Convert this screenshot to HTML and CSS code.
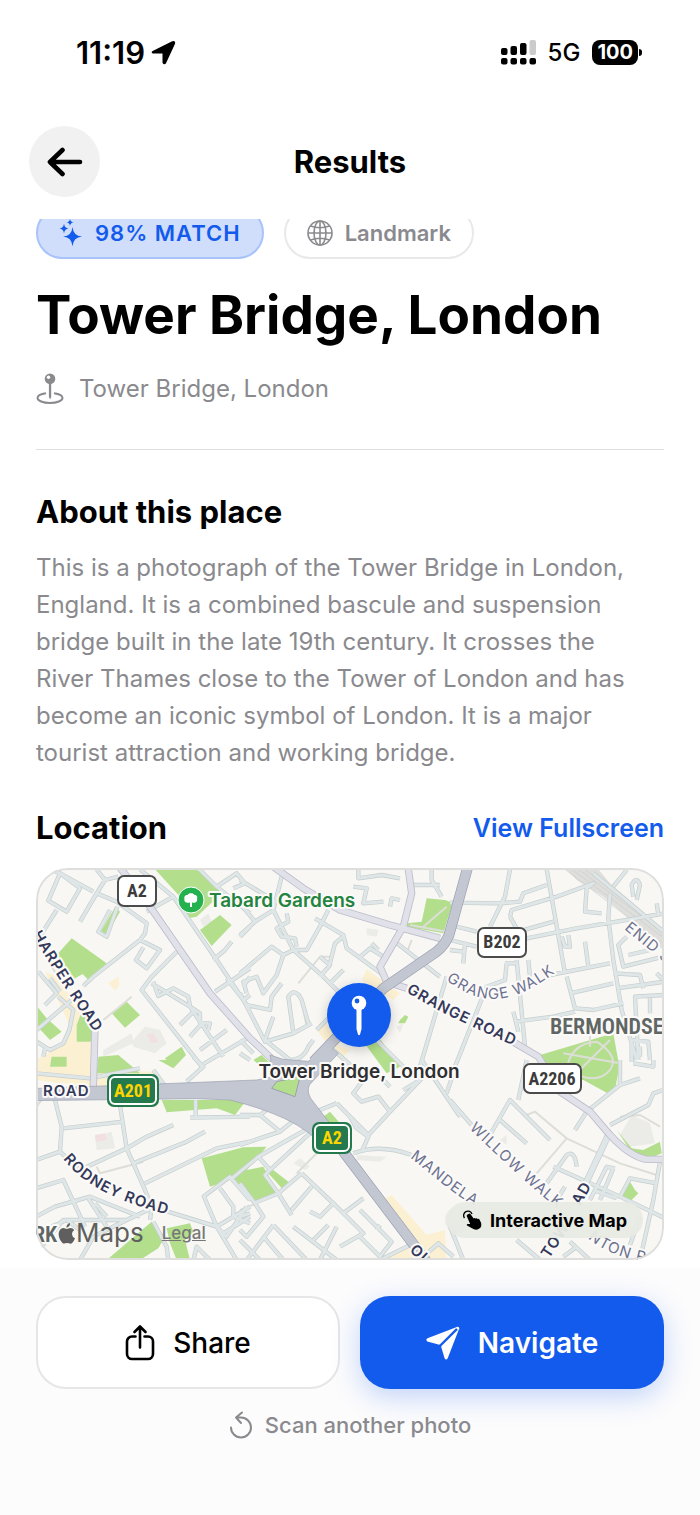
FILE: index.html
```html
<!DOCTYPE html>
<html lang="en">
<head>
<meta charset="utf-8">
<meta name="viewport" content="width=device-width, initial-scale=1">
<title>Results</title>
<link rel="stylesheet" href="styles.css">
</head>
<body>
<div class="screen">
  <div class="status">
    <div class="status-side">
      <span class="clock">11:19</span>
      <svg width="25" height="25" viewBox="0 0 25 25"><path d="M2 11.600 21.500 2q2.500-.8 1.700 1.700L14.500 22.500q-1.200 1.800-2.200 0V13.800q0-1.100-1.100-1.100H2.300q-1.500-.3-.3-1.100z" stroke="#000" stroke-width="1.600" stroke-linejoin="round"/></svg>
    </div>
    <div class="status-side status-right">
      <svg width="35" height="25" viewBox="0 0 35 25"><rect x="0" y="8" width="6.500" height="7" rx="2"/><rect x="9.500" y="6" width="6.500" height="9" rx="2"/><rect x="19" y="3" width="6.500" height="12" rx="2"/><rect x="28.500" y="0" width="6.500" height="15" rx="2" fill="#cbcbcb"/><rect x="0" y="18" width="6.500" height="6.500" rx="2"/><rect x="9.500" y="18" width="6.500" height="6.500" rx="2"/><rect x="19" y="18" width="6.500" height="6.500" rx="2"/><rect x="28.500" y="18" width="6.500" height="6.500" rx="2"/></svg>
      <span class="network">5G</span>
      <span class="battery">100</span>
    </div>
  </div>

  <header class="header">
    <button class="back" type="button" aria-label="Back">
      <svg width="36" height="30" viewBox="0 0 36 30"><path d="M33 15H3M15.500 3 3 15l12.500 12" fill="none" stroke="#000" stroke-width="4.600" stroke-linecap="round" stroke-linejoin="round"/></svg>
    </button>
    <h1 class="header-title">Results</h1>
  </header>

  <main class="content">
    <div class="pills">
      <span class="pill pill-match">
        <svg width="24" height="28" viewBox="0 0 24 28" fill="#135bec"><path d="M13.500 8q.8 9 9.500 9.500-8.700.8-9.500 9.800-.8-9-9.300-9.800 8.500-.5 9.300-9.500zM5 4.500q.5 4.500 4.500 5-4 .5-4.500 5-.5-4.500-4.500-5 4-.5 4.500-5zM11 0q.4 3 3.500 3.300Q11.400 3.700 11 7q-.4-3.300-3.300-3.700Q10.600 3 11 0z"/></svg>
        98% MATCH</span>
      <span class="pill pill-type">
        <svg width="26" height="26" viewBox="0 0 26 26" fill="none" stroke="#8a8a8e" stroke-width="1.600"><circle cx="13" cy="13" r="12"/><ellipse cx="13" cy="13" rx="6" ry="12"/><path d="M13 1v24M1 13h24M3.500 6Q13 9.500 22.500 6M3.500 20Q13 16.500 22.500 20"/></svg>
        Landmark</span>
    </div>

    <h2 class="title">Tower Bridge, London</h2>
    <p class="place">
      <svg width="28" height="32" viewBox="0 0 27 32"><path d="M9.500 20.300C4.500 21 1 22.700 1 25c0 2.800 5.600 5 12.500 5S26 27.800 26 25c0-2.300-3.500-4-8.500-4.700" fill="none" stroke="#8a8a8e" stroke-width="2"/><path d="M12.400 10h2.300v14l-1.100 2.500-1.200-2.500z" fill="#8a8a8e"/><circle cx="13.500" cy="5.800" r="5.300" fill="#8a8a8e"/><circle cx="12" cy="4.300" r="1.700" fill="#fff"/></svg>
      Tower Bridge, London</p>

    <section class="about">
      <h3 class="heading">About this place</h3>
      <p class="about-text">This is a photograph of the Tower Bridge in London, England. It is a combined bascule and suspension bridge built in the late 19th century. It crosses the River Thames close to the Tower of London and has become an iconic symbol of London. It is a major tourist attraction and working bridge.</p>
    </section>

    <section class="location">
      <div class="location-head">
        <h3 class="heading">Location</h3>
        <a class="fullscreen" href="#map">View Fullscreen</a>
      </div>
      <div class="map" id="map">
        <svg class="map-art" viewBox="0 0 628 392" preserveAspectRatio="xMidYMid slice" role="img" aria-label="Map of Tower Bridge, London">
          <defs>
            <g id="minor">
              <path d="M60 28 90 40 55 122 110 155 150 85 90 40 190 95M80 150 20 245M225 60 200 100 150 185M225 60 200 28M225 60 265 50M200 100 260 125 350 190 345 220 330 240 190 350 160 378M262 140 230 230 205 215 240 150M330 240 390 270 350 325 318 300 340 262M440 275 365 350 335 390 520 625M330 28 430 110 560 300 660 450M430 110 350 155M555 395 660 325M510 30 560 80 660 160M560 80 620 40 645 70 610 85M550 300 585 270 605 245M630 230 660 200M25 335 80 400 45 435M60 355 90 395M85 410 130 450 118 510 100 550 60 570 20 545M20 510 125 420M45 565 40 590M370 365 385 408 430 385 475 410 480 440 510 460 510 490 540 490 535 510M450 495 495 450M480 530 520 485M510 570 590 510M520 612 660 530M365 370 480 440 580 590M590 355 640 420 660 405M640 380 660 350"/>
              <path transform="translate(630)" d="M0 60 100 120M125 50 100 150 160 270 250 350 300 400M0 225 45 185 100 150M0 130 45 185M140 160 145 185 110 205 125 230 165 235 170 260M160 270 200 270 245 190 265 150M225 175 310 225 320 265 430 345M315 225 285 250 270 310M0 340 95 260 130 285 110 345 70 400 50 350 10 365 20 400M130 285 160 270M0 400 75 545 160 520 215 490M100 470 75 540 150 600M20 435 90 450 95 410 125 370M160 520 145 410Q165 380 185 420L205 490M230 510 300 440M240 350 270 315 240 290M270 370 310 330M355 28 355 55 425 45 480 55M340 80 380 85 370 130 430 125M450 140 455 115 480 120M520 75 600 75M575 28 575 60 605 110M355 295 390 265 430 290M395 250 415 270M465 245 600 350M620 350 540 620M275 565 360 640M400 530 490 620M145 600Q190 600 205 560L220 540M0 540 40 580M0 580 30 600"/>
              <path transform="translate(1260)" d="M0 128 150 130 210 125 220 100 290 75M180 28 165 110 120 200M290 28 345 340M180 170 185 150 320 110 430 70 410 85 405 155 455 160M180 170 205 215 310 185M0 195 80 215M0 240 80 260M230 235 380 205 500 185 645 160M430 40 540 130 640 215M480 100 475 175 490 300 515 450 560 600M550 110 545 75Q560 45 570 75L560 120M530 230 505 255 520 320 640 290M535 285 600 270M170 310 165 360 110 380 15 620M200 310 165 310M235 300 240 350M200 300 225 560M300 345 480 310M405 245 415 320M335 230 345 260 360 260 355 225M350 350 375 445 430 450 520 430M360 400 490 370M490 340 570 345 580 385M500 385 645 365 620 340M190 455 205 515M195 485 310 470 375 455M565 600 555 410 640 405M600 600 595 545 545 540 545 605M570 560 570 590M600 410 600 460M490 80 530 30M620 130 625 165M0 270 40 275M45 250 40 310"/>
              <path transform="translate(0 600)" d="M75 120 95 200 90 275 18 300M100 205 280 185M270 135 290 265 345 390 365 440 360 480M90 275 150 330 290 265 350 230 430 195M310 310 470 245 525 215M345 370 560 265 660 245M365 440 560 500 620 600M18 385 100 360 165 500M18 470 75 440 180 410 330 470M195 430 230 470M175 415 230 500M365 445 290 480 190 530 150 600M370 485 410 560 415 600M520 405 560 500 660 440M520 410 600 350 660 420M570 385 610 440 610 470 660 490M480 173 660 170M497 120 497 170M490 600 500 560 540 600M18 580 100 480 290 480M18 520 110 480 150 510M470 65 520 20 490-10M18 40 180 55 330 25M370 30 410 85M560 500 590 530 650 440M580 520 660 470"/>
              <path transform="translate(630 600)" d="M0 165 60 165 120 215 200 150M80 150 60 165M0 255 120 215M-30 360 55 290 240 185M55 290 90 330 215 215M290 130 385 225 450 155 415 110 365 125 340 100 370 60M215 160 290 130M330 170 350 205 385 230 365 275M450 155 560 40M340 280Q420 250 515 285M400 30 450 80M490 90 540 60M185 340 115 400 40 430M185 340 280 430 240 470 210 455M280 430 370 520 300 560M115 400 155 465M155 450 215 380M310 460 370 415M90 330 75 345 115 400M0 370 45 430 70 470 20 530 0 510M0 540 60 600M100 495 20 600M100 495 200 600M160 500 290 600M220 540 265 495M360 450 455 545 420 590 360 530M420 495 410 510M420 600 520 550M545 0 660 170M640 40 620 100M550 590 595 550 640 590M70 530 130 600M290 500 240 600M0 470 30 460"/>
              <path transform="translate(1260 600)" d="M0 120 65 195M230 0 205 120M120 225 180 120 300 240M150 180 230 250M510 75 410 155 375 210M480 195 595 135 610 100 640 90M310 320 510 410 645 475M290 370 350 285Q375 270 380 320M345 380 320 420M470 320 420 420M490 325 450 420M630 305 610 420 570 600M510 410 540 355 620 370M200 540 270 600M360 545 420 600M340 590 380 560M510 0 510 75 570 55M550 10 610 20 610 0M0 500 40 600M430 390 500 415M540 555 570 470M465 320 495 325"/>
            </g>
            <path id="mid" d="M260 10 360 140 540 400 660 535 740 610M730 20 820 85 930 150 1080 195 1230 235M1135 28 1145 100 1120 200 1050 320 1070 365 1130 385M1440 540 1525 590 1590 695 1680 755 1740 825Q1800 890 1850 898H1905M195 500 190 680"/>
            <path id="trunk" d="M1315 15 1257 225Q1245 255 1220 275L1060 385 980 470 850 605M800 690 1190 1205"/>
            <path id="junction" d="M0 686 380 672 680 660 730 650 720 585 760 598 835 604 900 560 925 580 838 675Q830 695 842 715L915 810 870 850Q800 770 600 720L500 716 0 722Z"/>
            <path id="p-harper" d="M-4 66C18 104 38 134 64 172"/>
            <path id="p-rodney" d="M27 291C50 320 85 335 145 350"/>
            <path id="p-grange" d="M370 124C404 145 435 158 496 186"/>
            <path id="p-walk" d="M410 112C442 135 470 143 524 101"/>
            <path id="p-willow" d="M433 261C460 285 486 313 530 347"/>
            <path id="p-mandela" d="M374 290C393 303 412 324 446 342"/>
            <path id="p-enid" d="M588 61 660 120"/>
            <path id="p-lynton" d="M552 370Q572 389 626 398"/>
          </defs>
          <g transform="scale(.33333) translate(-18 -24)">
            <path class="land" d="M0 0H1920V1220H0z"/>
            <path class="sand" d="M45 335 70 345 130 420 165 470 185 550 185 680 18 660V600L100 550 120 500zM200 630 380 635 380 670 190 680zM1010 328 1110 400 1090 420 995 360zM890 490 930 560 960 570 930 600 860 510zM1065 1015 1085 1005 1190 1125 1245 1110 1250 1200H1040L1140 1150zM235 370 265 350 268 375 255 392z"/>
            <path class="block" d="M305 545 345 500 390 510 410 550 375 580 310 560zM195 830 245 815 255 865 200 870zM1805 765 1860 790 1875 850 1800 860 1770 825zM1010 205 1045 210 1040 230 1010 225zM510 180 535 160 545 185 520 200zM790 910 810 895 840 920 825 930zM1410 840 1430 825 1430 855zM220 570 305 520 310 550 220 590zM1100 500 1120 490 1110 520zM980 885 1070 890 1050 905 980 900z"/>
            <path class="pink" d="M350 525 370 520 385 545 365 550zM195 825 225 820 230 840 198 845z"/>
            <circle class="block" cx="1285" cy="1080" r="40"/>
            <path class="park" d="M80 285 125 235 230 310 175 360 158 342 130 358zM255 142 270 155 230 225 212 215zM375 28H500L580 95 500 170 475 175 450 110zM510 210 570 165 605 195 545 258zM245 460 290 425 330 465 285 503zM18 435 50 475 95 515 60 540 18 495zM155 455 185 505 190 545 140 545V495zM405 595 455 560 468 585 430 625zM205 590 265 585 330 640H200zM65 590H110V620H60zM1190 115 1245 120 1268 128 1240 220 1130 200V190L1175 185zM1000 545 1045 530 1110 620 1070 640zM670 600 695 585 720 610 700 625zM1110 480 1125 465 1135 470 1125 490 1105 490zM1530 585 1750 520 1768 620 1755 690 1730 698 1660 660 1560 660zM395 720H650L615 765 560 745 410 757zM515 895 640 862 710 860 650 930 700 920 745 1000 672 1033 600 960 540 980zM715 940 730 930 775 965 760 990zM230 1200 365 1085 405 1130 385 1165 330 1200zM410 1105 480 1090 490 1115 465 1140 480 1200H440L420 1150zM880 770 900 755 930 790 890 795zM1760 810 1805 865 1840 870 1890 845 1895 880 1860 895 1810 885zM1775 1010 1800 965 1815 990 1825 1000 1800 1025zM385 600H450L430 625z"/>
            <path class="rail" d="M1590 10H1690L1740 70 1910 215V280L1830 205 1720 110 1640 60z"/>
            <path class="rail-line" d="M1620 24 1910 240M1640 24 1910 225M1600 24 1910 260M1660 24 1910 215"/>
            <path class="foot" d="M1490 765 1515 755 1610 835 1770 910 1880 945M1610 835 1520 940M220 480 305 410M805 370 870 290 900 290M830 500 810 400M1145 240 1130 280M50 300 85 350M48 700 20 740M200 920 210 940 340 905M630 1050 680 1030M800 940 870 870M1610 630Q1620 550 1700 545 1770 590 1740 630 1700 680 1610 630M1600 580 1770 610M1640 640 1740 540M1680 520V560M1770 770 1830 765 1890 800M1140 195 1250 215M1180 200 1250 140"/>
            <use href="#minor" class="minor-case"/>
            <use href="#minor" class="minor-fill"/>
            <path class="minor-case wide-case" d="M1735 825 1665 975"/>
            <path class="minor-fill wide-fill" d="M1735 825 1665 975"/>
            <use href="#mid" class="mid-case"/>
            <use href="#mid" class="mid-fill"/>
            <use href="#trunk" class="trunk-case"/>
            <use href="#junction" class="junction"/>
            <use href="#trunk" class="trunk-fill"/>
            <path class="park edge" d="M725 685 740 665 810 650 795 710z"/>
          </g>

          <g class="road">
            <text><textPath href="#p-harper">HARPER ROAD</textPath></text>
            <text><textPath href="#p-rodney">RODNEY ROAD</textPath></text>
            <text><textPath href="#p-grange">GRANGE ROAD</textPath></text>
            <text transform="translate(513 391) rotate(-57)">TOW</text>
            <text transform="translate(544 338) rotate(-60)">AD</text>
            <text x="7" y="228">ROAD</text>
            <text transform="translate(373 383) rotate(42)">OL</text>
          </g>
          <g class="road street">
            <text><textPath href="#p-walk">GRANGE WALK</textPath></text>
            <text><textPath href="#p-willow">WILLOW WALK</textPath></text>
            <text><textPath href="#p-mandela">MANDELA</textPath></text>
            <text><textPath href="#p-enid">ENID S</textPath></text>
            <text><textPath href="#p-lynton">NTON R</textPath></text>
          </g>
          <text class="district" x="514" y="166">BERMONDSE</text>
          <text class="district" x="-3" y="374">RK</text>

          <g class="shield">
            <rect x="82" y="8" width="38" height="30" rx="6"/><text x="101" y="29">A2</text>
            <rect x="442" y="60" width="48" height="29" rx="6"/><text x="466" y="80">B202</text>
            <rect x="488" y="196" width="57" height="29" rx="6"/><text x="516" y="217">A2206</text>
          </g>
          <g class="shield shield-green">
            <rect class="rim" x="72" y="207" width="50" height="31" rx="6"/><rect x="74" y="209" width="46" height="27" rx="5"/><text x="97" y="229">A201</text>
            <rect class="rim" x="277" y="255" width="38" height="30" rx="6"/><rect x="279" y="257" width="34" height="26" rx="5"/><text x="296" y="276">A2</text>
          </g>

          <circle class="poi" cx="155" cy="32" r="13"/>
          <path fill="#fff" d="M154 39v-4.500c-3 1-6.500-.5-5.500-3.500-1-2.500 1.500-4.500 3-4 1-2.500 6-2.500 7 0 2-.2 3.500 2 2.500 4 1 3-2.500 4.500-5 3.500V39z"/>
          <text class="poi-label" x="173" y="39">Tabard Gardens</text>

          <circle class="pin" cx="323" cy="147" r="32"/>
          <path fill="#fff" d="M320.500 140h5v21l-1.500 5.500q-1 1.500-2 0l-1.500-5.500z"/>
          <circle cx="323" cy="135" r="7.300" fill="#fff"/><circle cx="321" cy="133" r="2.400" fill="#135bec"/>
          <text class="pin-label" x="323" y="210">Tower Bridge, London</text>
        </svg>

        <div class="attribution">
          <span class="apple-maps"><svg width="17" height="21" viewBox="0 0 17 21"><path d="M12 0q.3 3.500-3.600 4.800Q8.200 1.500 12 0zM8.500 6c1 0 2-1 4-1q2.300.1 3.800 2-2.500 1.500-2.300 4.200.2 3 3 4.100-1 3-3 5-1.500.8-3 0-2-.8-3.800 0-1.500.7-2.700-.2C.5 16 .2 11.500 1 8.700 2 6 4.200 5 5.500 5.100 7 5.200 7.700 6 8.500 6z"/></svg>Maps</span>
          <a class="legal" href="#legal">Legal</a>
        </div>
        <div class="hint">
          <svg width="19" height="20" viewBox="0 0 19 20"><path d="M5.500 4q1.200-1 2.100.2l3 4.300q1-.8 2 .1 1.200-.7 2 .3 1.300-.4 2 .8 1.900 3 1.700 6.300-.7 3-3.800 3.500-3 .6-5.500-1.300L4 15.500q-.8-1.300.9-1.600l2.300.2L3.800 6.300Q3.300 4.800 5.500 4z"/><path d="M1.500 8A4.300 4.300 0 1 1 9 4" fill="none" stroke="#000" stroke-width="1.300"/></svg>
          Interactive Map</div>
      </div>
    </section>
  </main>

  <footer class="footer">
    <div class="actions">
      <button class="action share" type="button">
        <svg width="30" height="36" viewBox="0 0 30 36" fill="none" stroke="#000" stroke-width="2.600" stroke-linecap="round" stroke-linejoin="round"><path d="M10.500 11.500H7a5 5 0 0 0-5 5V29a5 5 0 0 0 5 5h16a5 5 0 0 0 5-5V16.500a5 5 0 0 0-5-5h-3.500M15 22.500V2M9.500 7 15 1.500 20.500 7"/></svg>
        Share</button>
      <button class="action navigate" type="button">
        <svg width="34" height="34" viewBox="0 0 34 34" fill="#fff"><path d="M1.500 12.300 31.500.8 14 18.300q-.7.500-1.600.3L1.300 15.400Q-.7 13.500 1.500 12.300z"/><path d="M33.200 2.500 21.800 32q-1.700 3-3.300 0L15.300 21.300q-.2-.8.400-1.500z"/><path d="M30.500.9Q33.600-.2 33.300 3.200L32 4 30 2z"/></svg>
        Navigate</button>
    </div>
    <button class="again" type="button">
      <svg width="24" height="28" viewBox="0 0 24 28" fill="none" stroke="#8a8a8e" stroke-width="2" stroke-linecap="round" stroke-linejoin="round"><path d="M2 16.500A10 10 0 1 0 12 6.500L7 6.500M13 1.500l-6 5 5 5.500"/></svg>
      Scan another photo</button>
  </footer>
</div>
</body>
</html>
```

FILE: styles.css
```css
* { box-sizing: border-box; }
body {
  margin: 0;
  background: #fff;
  color: #000;
  font-family: Inter, "Liberation Sans", sans-serif;
}
h1, h2, h3, p { margin: 0; }
button { font: inherit; border: 0; padding: 0; cursor: pointer; }
svg { display: block; flex: none; }

.screen { min-height: 100vh; display: flex; flex-direction: column; }

.status {
  display: flex;
  justify-content: space-between;
  align-items: center;
  height: 104px;
  padding: 0 62px 0 76px;
}
.status-side { display: flex; align-items: center; gap: 6px; }
.status-right { gap: 12px; }
.clock { font-size: 31px; font-weight: 600; }
.network { font-size: 24px; font-weight: 500; }
.battery {
  position: relative;
  padding: 0 5px;
  border-radius: 8px;
  background: #000;
  color: #fff;
  font-size: 20px;
  line-height: 25px;
  font-weight: 700;
}
.battery::after {
  content: "";
  position: absolute;
  right: -4px;
  top: 9px;
  width: 3px;
  height: 7px;
  border-radius: 0 3px 3px 0;
  background: #000;
}

.header {
  position: relative;
  z-index: 1;
  display: grid;
  grid-template-columns: 71px 1fr 71px;
  align-items: center;
  height: 115px;
  padding: 0 29px;
  background: #fff;
}
.back {
  display: grid;
  place-items: center;
  width: 71px;
  height: 71px;
  border-radius: 50%;
  background: #f1f1f1;
}
.header-title { text-align: center; font-size: 31px; font-weight: 700; }

.content { padding: 0 36px; margin-top: -12px; }
.pills { display: flex; gap: 20px; }
.pill {
  display: flex;
  align-items: center;
  gap: 12px;
  height: 52px;
  padding: 0 21px;
  border: 2px solid #e9e9eb;
  border-radius: 26px;
  font-size: 22px;
  font-weight: 600;
}
.pill-match { background: #d0defb; border-color: #a8c3fa; color: #135bec; letter-spacing: 1px; }
.pill-type { color: #8a8a8e; }

.title { margin-top: 24px; font-size: 53px; line-height: 64px; font-weight: 700; }
.place {
  display: flex;
  align-items: center;
  gap: 15px;
  margin-top: 26px;
  padding-bottom: 44px;
  border-bottom: 1px solid #dedee0;
  color: #8a8a8e;
  font-size: 24px;
  line-height: 32px;
}
.heading { font-size: 31px; line-height: 40px; font-weight: 700; }
.about { margin-top: 42px; }
.about-text { margin-top: 17px; padding-right: 24px; font-size: 24px; line-height: 37px; color: #8a8a8e; }
.location { margin-top: 37px; }
.location-head { display: flex; justify-content: space-between; align-items: center; }
.fullscreen { color: #135bec; font-size: 25px; font-weight: 600; text-decoration: none; }

.map {
  position: relative;
  margin-top: 20px;
  aspect-ratio: 628 / 392;
  border-radius: 32px;
  overflow: hidden;
}
.map::after {
  content: "";
  position: absolute;
  inset: 0;
  border: 2px solid #dededd;
  border-radius: 32px;
  pointer-events: none;
}
.map-art { width: 100%; height: 100%; }
.land { fill: #f8f7f3; }
.sand { fill: #fcf0d3; }
.block { fill: #ebebe7; }
.pink { fill: #f2dfe0; }
.park { fill: #b3df8d; }
.edge { stroke: #9b9fb0; stroke-width: 3px; }
.rail { fill: #dededc; }
.rail-line { fill: none; stroke: #cdcdcd; stroke-width: 2px; }
.foot { fill: none; stroke: #deded9; stroke-width: 6px; }
.minor-case, .minor-fill, .mid-case, .mid-fill, .trunk-case, .trunk-fill { fill: none; stroke-linejoin: round; }
.minor-case { stroke: #c5cdcd; stroke-width: 13px; }
.minor-fill { stroke: #dfe6e7; stroke-width: 9px; }
.wide-case { stroke-width: 20px; }
.wide-fill { stroke-width: 16px; }
.mid-case { stroke: #bdbdcb; stroke-width: 22px; }
.mid-fill { stroke: #e1e1ea; stroke-width: 17px; }
.trunk-case { stroke: #999fb0; stroke-width: 32px; }
.trunk-fill { stroke: #c3c7d2; stroke-width: 28px; }
.junction { fill: #c3c7d2; stroke: #999fb0; stroke-width: 2px; }

.map-art text { paint-order: stroke; stroke: #fbfaf8; stroke-width: 4px; stroke-linejoin: round; }
.road { font-size: 15px; font-weight: 600; fill: #34395a; letter-spacing: 1px; }
.street { font-weight: 400; fill: #6c7190; }
.map-art .district {
  font-family: "Liberation Sans Narrow", "Roboto Condensed", Roboto, sans-serif;
  font-size: 22px;
  font-weight: 600;
  fill: #606664;
}
.shield rect { fill: #fff; stroke: #4b4b4b; stroke-width: 2px; }
.map-art .shield text {
  font-family: "Liberation Sans Narrow", "Roboto Condensed", Roboto, sans-serif;
  font-size: 18px;
  font-weight: 700;
  text-anchor: middle;
  fill: #3c3c3c;
  stroke: none;
}
.shield-green rect { fill: #247a4d; stroke: #fff; }
.shield-green .rim { stroke: #247a4d; }
.map-art .shield-green text { fill: #ffd500; }
.poi { fill: #25b14e; stroke: #fff; stroke-width: 1px; }
.poi-label { font-size: 19px; font-weight: 600; fill: #23843f; }
.pin { fill: #135bec; filter: drop-shadow(0 3px 6px rgba(0, 0, 0, .2)); }
.pin-label { font-size: 19px; font-weight: 600; text-anchor: middle; fill: #2e2e30; }

.attribution {
  position: absolute;
  left: 22px;
  bottom: 10px;
  display: flex;
  align-items: center;
  gap: 18px;
  color: #5f5f5f;
  fill: #5f5f5f;
}
.apple-maps { display: flex; align-items: center; gap: 1px; font-size: 26px; line-height: 34px; }
.legal { color: #777; font-size: 17px; font-weight: 500; }
.hint {
  position: absolute;
  right: 21px;
  bottom: 22px;
  display: flex;
  align-items: center;
  gap: 8px;
  height: 36px;
  padding: 0 16px;
  border-radius: 18px;
  background: rgba(232, 234, 228, .95);
  font-size: 18px;
  font-weight: 700;
}

.footer {
  flex: 1;
  display: flex;
  flex-direction: column;
  align-items: center;
  gap: 20px;
  margin-top: 8px;
  padding: 28px 36px;
  background: #fcfcfd;
}
.actions { display: grid; grid-template-columns: 1fr 1fr; gap: 20px; width: 100%; }
.action {
  display: flex;
  justify-content: center;
  align-items: center;
  gap: 18px;
  height: 93px;
  border-radius: 30px;
  font-size: 28px;
}
.share { border: 2px solid #e6e6e8; background: #fff; color: #000; font-weight: 500; }
.navigate { background: #135bec; color: #fff; font-weight: 600; box-shadow: 0 8px 28px rgba(19, 91, 236, .25); }
.again {
  display: flex;
  align-items: center;
  gap: 12px;
  background: none;
  color: #8a8a8e;
  font-size: 22px;
  line-height: 32px;
  font-weight: 500;
}
```
